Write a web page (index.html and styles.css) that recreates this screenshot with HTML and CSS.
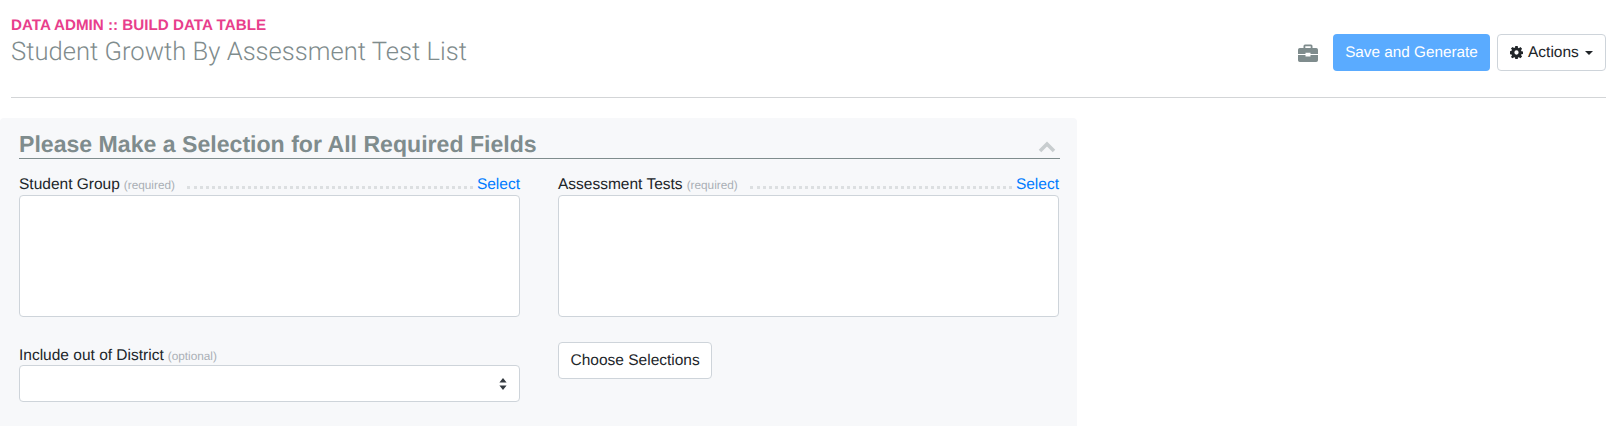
FILE: index.html
```html
<!DOCTYPE html>
<html lang="en">
<head>
<meta charset="utf-8">
<title>Build Data Table</title>
<link rel="stylesheet" href="styles.css">
</head>
<body>
<header class="page-head">
  <div class="titles">
    <div class="crumb">DATA ADMIN :: BUILD DATA TABLE</div>
    <h1 class="title">Student Growth By Assessment Test List</h1>
  </div>
  <div class="head-actions">
    <svg class="briefcase" viewBox="0 0 20 18" aria-hidden="true">
      <path d="M7 0.5h6a1.5 1.5 0 0 1 1.5 1.5v2h-1.8V2.2H7.3V4H5.5V2A1.5 1.5 0 0 1 7 0.5z"/>
      <path d="M1.8 4h16.4A1.8 1.8 0 0 1 20 5.8V10h-7.5V8.8h-5V10H0V5.8A1.8 1.8 0 0 1 1.8 4z"/>
      <path d="M0 11h7.5v1.5h5V11H20v5.2a1.8 1.8 0 0 1-1.8 1.8H1.8A1.8 1.8 0 0 1 0 16.2z"/>
    </svg>
    <button class="btn btn-primary" type="button">Save and Generate</button>
    <button class="btn btn-light btn-actions" type="button">
      <svg class="gear" viewBox="0 0 14 14" aria-hidden="true">
        <path fill-rule="evenodd" d="M5.7 0h2.6l.3 1.9 1 .4 1.6-1.1 1.8 1.8-1.1 1.6.4 1 1.9.3v2.6l-1.9.3-.4 1 1.1 1.6-1.8 1.8-1.6-1.1-1 .4-.3 1.9H5.7l-.3-1.9-1-.4-1.6 1.1L1 11.8l1.1-1.6-.4-1L0 8.9V5.7l1.7-.6.4-1L1 2.6 2.8 1l1.6 1.1 1-.4zM7 4.7a2.3 2.3 0 1 0 0 4.6 2.3 2.3 0 0 0 0-4.6z"/>
      </svg>
      <span>Actions</span>
      <span class="caret"></span>
    </button>
  </div>
</header>
<hr class="rule">
<section class="panel">
  <div class="panel-head">
    <h2 class="panel-title">Please Make a Selection for All Required Fields</h2>
    <svg class="chevron" viewBox="0 0 18 12" aria-hidden="true"><path d="M2 10l7-7 7 7" /></svg>
  </div>
  <div class="form-grid">
    <div class="field">
      <div class="field-label">
        <span class="label">Student Group</span>
        <span class="hint">(required)</span>
        <span class="dots"></span>
        <a class="select-link" href="#">Select</a>
      </div>
      <div class="box"></div>
    </div>
    <div class="field">
      <div class="field-label">
        <span class="label">Assessment Tests</span>
        <span class="hint">(required)</span>
        <span class="dots"></span>
        <a class="select-link" href="#">Select</a>
      </div>
      <div class="box"></div>
    </div>
    <div class="field field-low">
      <div class="field-label">
        <span class="label">Include out of District</span>
        <span class="hint">(optional)</span>
      </div>
      <div class="select-box">
        <svg class="updown" viewBox="0 0 8 12" aria-hidden="true"><path d="M4 0l3.6 4.6H.4zM4 12L.4 7.4h7.2z"/></svg>
      </div>
    </div>
    <div class="field field-btn">
      <button class="btn btn-light" type="button">Choose Selections</button>
    </div>
  </div>
</section>
</body>
</html>
```

FILE: styles.css
```css
* { box-sizing: border-box; }

html, body { height: 100%; }

body {
  margin: 0;
  overflow: hidden;
  background: #fff;
  color: #212529;
  font-family: "Liberation Sans", Arial, sans-serif;
  font-size: 16px;
  text-rendering: geometricPrecision;
}

.page-head {
  display: flex;
  justify-content: space-between;
  align-items: flex-start;
  height: 97px;
  padding: 17px 8px 0 11px;
}

.crumb {
  color: #e83e8c;
  font-size: 15.2px;
  font-weight: 700;
  line-height: 17px;
}

.title {
  margin: 0;
  color: #7f8c8d;
  font-family: Roboto, "Liberation Sans", sans-serif;
  font-size: 25.6px;
  font-weight: 300;
  line-height: 37px;
}

.head-actions {
  display: flex;
  align-items: center;
  margin-top: 17px;
}

.briefcase {
  width: 20px;
  height: 18px;
  margin-right: 15px;
  fill: #7f8c8d;
}

.btn {
  height: 37px;
  padding: 0 11.5px;
  border: 1px solid transparent;
  border-radius: 4px;
  font-family: "Liberation Sans", Arial, sans-serif;
  font-size: 15.5px;
  line-height: 33px;
  white-space: nowrap;
  text-rendering: geometricPrecision;
}

.btn-primary {
  width: 157px;
  padding: 0;
  background: #5aabff;
  color: #fff;
  font-size: 15.3px;
}

.btn-light {
  background: #fff;
  border-color: #ced4da;
  color: #212529;
}

.btn-actions {
  display: flex;
  align-items: center;
  width: 109px;
  margin-left: 7px;
  padding: 0 12px;
}

.gear {
  width: 13px;
  height: 13px;
  margin-right: 5px;
  fill: #212529;
}

.caret {
  width: 0;
  height: 0;
  margin-left: 6px;
  border-top: 4.5px solid #212529;
  border-left: 4.5px solid transparent;
  border-right: 4.5px solid transparent;
}

.rule {
  height: 1px;
  margin: 0 8px 20px 11px;
  border: 0;
  background: #d3d5d7;
}

.panel {
  width: 1077px;
  height: 308px;
  padding: 8px 17px 0 19px;
  border-radius: 4px 4px 0 0;
  background: #f7f8fa;
}

.panel-head {
  display: flex;
  justify-content: space-between;
  align-items: flex-end;
  height: 33px;
  border-bottom: 1px solid #7f8c8d;
}

.panel-title {
  margin: 0;
  color: #7f8c8d;
  font-size: 23.1px;
  font-weight: 700;
  line-height: 28px;
}

.chevron {
  width: 18px;
  height: 12px;
  margin: 0 4px 5px 0;
  fill: none;
  stroke: #c8cdcf;
  stroke-width: 3.6;
}

.form-grid {
  display: grid;
  grid-template-columns: 501px 501px;
  column-gap: 38px;
  padding-top: 14px;
}

.field-label {
  display: flex;
  align-items: baseline;
  height: 22px;
  padding-top: 1px;
  line-height: 22px;
  font-size: 15.5px;
}

.label { color: #212529; }

.hint {
  margin-left: 4px;
  color: #a9afb5;
  font-size: 11.8px;
}

.dots {
  flex: 1;
  height: 3px;
  margin: 0 4px 0 12px;
  border-bottom: 3px dotted #dcdfe1;
}

.select-link {
  color: #007bff;
  text-decoration: none;
}

.box {
  height: 122px;
  background: #fff;
  border: 1px solid #ced4da;
  border-radius: 4px;
}

.field-low { margin-top: 27px; }

.field-low .field-label { height: 21px; }

.select-box {
  display: flex;
  justify-content: flex-end;
  align-items: center;
  height: 37px;
  padding-right: 12px;
  background: #fff;
  border: 1px solid #ced4da;
  border-radius: 4px;
}

.updown {
  width: 8px;
  height: 12px;
  fill: #343a40;
}

.field-btn { margin-top: 25px; }
```
